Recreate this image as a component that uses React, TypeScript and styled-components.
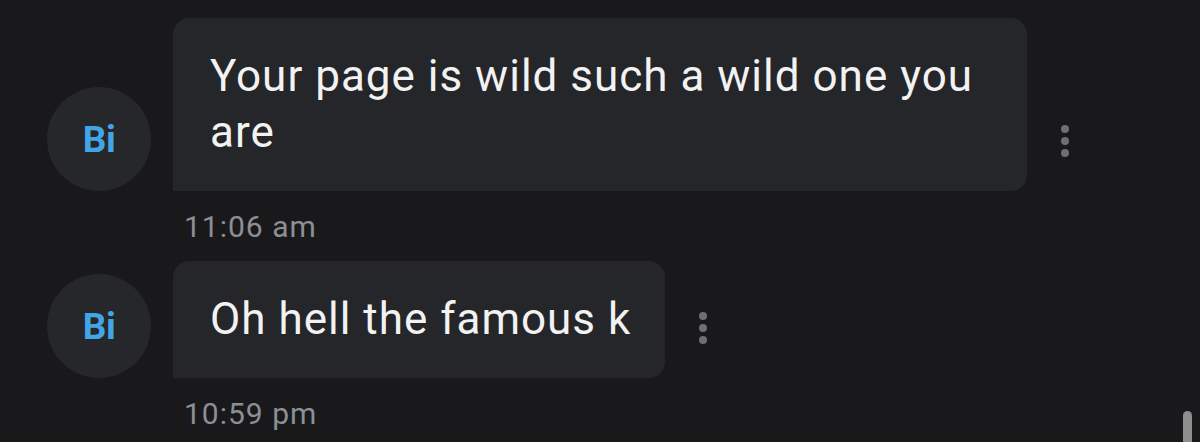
import React from "react";
import styled, { createGlobalStyle } from "styled-components";

const GlobalStyle = createGlobalStyle`
  html, body {
    margin: 0;
    padding: 0;
    background: #19191c;
    font-family: Roboto, "Noto Sans", "Liberation Sans", sans-serif;
  }
  body {
    height: 442px;
    overflow: hidden;
  }
`;

const Screen = styled.div`
  position: relative;
  width: 1200px;
  height: 442px;
  overflow: hidden;
  background: #19191c;
  box-sizing: border-box;
  padding: 18px 0 0 47px;
  display: flex;
  flex-direction: column;
  gap: 16px;
`;

const Group = styled.div`
  display: flex;
  flex-direction: column;
`;

const Row = styled.div`
  display: flex;
  align-items: flex-end;
`;

const Avatar = styled.div`
  flex: 0 0 auto;
  width: 104px;
  height: 104px;
  border-radius: 50%;
  background: #26272b;
  display: flex;
  align-items: center;
  justify-content: center;
  color: #42a5e6;
  font-weight: 700;
  font-size: 37px;
  letter-spacing: -0.5px;
  margin-right: 22px;
`;

const Bubble = styled.div`
  box-sizing: border-box;
  max-width: 854px;
  background: #25262a;
  border-radius: 16px 16px 16px 0;
  padding: 30px 34px 31px 37px;
  color: #f2f2f2;
  font-size: 44px;
  line-height: 56px;
  letter-spacing: 1px;
`;

const Dots = styled.div`
  display: flex;
  flex-direction: column;
  gap: 4px;
  margin: 0 0 34px 34px;
`;

const Dot = styled.span`
  width: 8px;
  height: 8px;
  border-radius: 50%;
  background: #6c6f75;
`;

const Time = styled.div`
  margin: 18px 0 0 137px;
  color: #8c8f95;
  font-size: 30px;
  line-height: 36px;
  letter-spacing: 1px;
`;

const Scrollbar = styled.div`
  position: absolute;
  right: 8px;
  top: 411px;
  width: 9px;
  height: 40px;
  border-radius: 5px;
  background: #8e8e8e;
`;

const messages = [
  { text: "Your page is wild such a wild one you are", time: "11:06 am" },
  { text: "Oh hell the famous k", time: "10:59 pm" },
];

export default function App() {
  return (
    <>
      <GlobalStyle />
      <Screen>
        {messages.map((m) => (
          <Group key={m.time}>
            <Row>
              <Avatar>Bi</Avatar>
              <Bubble>{m.text}</Bubble>
              <Dots>
                <Dot />
                <Dot />
                <Dot />
              </Dots>
            </Row>
            <Time>{m.time}</Time>
          </Group>
        ))}
        <Scrollbar />
      </Screen>
    </>
  );
}
